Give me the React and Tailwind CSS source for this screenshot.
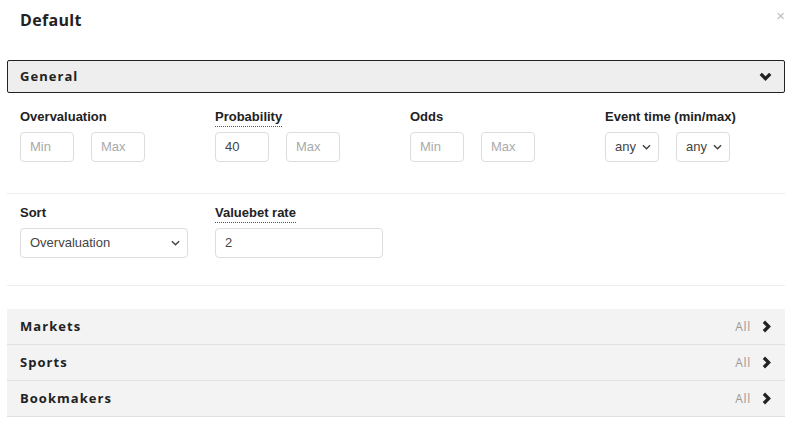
import React from "react";

const headFont = { fontFamily: '"Open Sans", "DejaVu Sans", sans-serif' };

const ChevronDown = ({ className }) => (
    <svg viewBox="0 0 12 8" className={className} fill="none">
        <path d="M1.6 1.6 L6 6 L10.4 1.6" stroke="currentColor" strokeWidth="3" strokeLinejoin="miter" />
    </svg>
);

const ChevronRight = ({ className }) => (
    <svg viewBox="0 0 8 12" className={className} fill="none">
        <path d="M1.6 1.6 L6 6 L1.6 10.4" stroke="currentColor" strokeWidth="3" strokeLinejoin="miter" />
    </svg>
);

const SmallCaret = () => (
    <svg viewBox="0 0 10 6" className="w-[9px] h-[6px] text-[#444]" fill="none">
        <path d="M1 1 L5 5 L9 1" stroke="currentColor" strokeWidth="1.6" />
    </svg>
);

const Label = ({ children, dotted }) => (
    <div className="h-[18px] mb-[5px] flex items-start leading-[16px]">
        <span
            className={
                "text-[13px] font-bold text-[#222] leading-[16px] block " +
                (dotted ? "border-b border-dotted border-[#555] pb-[1px]" : "")
            }
        >
            {children}
        </span>
    </div>
);

const Box = ({ value, placeholder, width = "w-[54px]" }) => (
    <div
        className={
            width +
            " h-[30px] border border-[#ddd] rounded-[4px] flex items-center px-[9px] text-[13px] " +
            (value ? "text-[#444]" : "text-[#aaa]")
        }
    >
        {value || placeholder}
    </div>
);

const SelectBox = ({ value, width }) => (
    <div
        className={
            width +
            " h-[30px] border border-[#ddd] rounded-[4px] flex items-center justify-between pl-[9px] pr-[7px] text-[13px] text-[#444]"
        }
    >
        <span>{value}</span>
        <SmallCaret />
    </div>
);

const Field = ({ label, dotted, children }) => (
    <div className="w-[195px] shrink-0">
        <Label dotted={dotted}>{label}</Label>
        <div className="flex gap-[17px]">{children}</div>
    </div>
);

const rows = ["Markets", "Sports", "Bookmakers"];

export default function App() {
    return (
        <div className="w-[800px] h-[430px] bg-white overflow-hidden" style={{ fontFamily: '"Liberation Sans", Arial, sans-serif' }}>
            <div className="h-[40px] flex items-center justify-between pl-5 pr-[15px]">
                <h1 className="text-[16px] font-bold text-[#222] tracking-[0.02em]" style={headFont}>
                    Default
                </h1>
                <span className="text-[15px] text-[#bbb] -mt-[8px]">×</span>
            </div>

            <div className="mt-[20px] mx-[7px] w-[778px] h-[33px] border-[1.5px] border-[#222] bg-[#eee] rounded-[2px] flex items-center justify-between pl-[12px] pr-[12px]">
                <span className="text-[13px] font-bold text-[#222] tracking-[0.08em]" style={headFont}>
                    General
                </span>
                <ChevronDown className="w-[13px] h-[9px] text-[#222]" />
            </div>

            <div className="mx-[7px] w-[778px] border-b border-[#eee] pt-[16px] pb-[31px] pl-[13px] flex overflow-visible">
                <Field label="Overvaluation">
                    <Box placeholder="Min" />
                    <Box placeholder="Max" />
                </Field>
                <Field label="Probability" dotted>
                    <Box value="40" />
                    <Box placeholder="Max" />
                </Field>
                <Field label="Odds">
                    <Box placeholder="Min" />
                    <Box placeholder="Max" />
                </Field>
                <Field label="Event time (min/max)">
                    <SelectBox value="any" width="w-[54px]" />
                    <SelectBox value="any" width="w-[54px]" />
                </Field>
            </div>

            <div className="mx-[7px] w-[778px] border-b border-[#eee] pt-[11px] pb-[27px] pl-[13px] flex">
                <Field label="Sort">
                    <SelectBox value="Overvaluation" width="w-[168px]" />
                </Field>
                <Field label="Valuebet rate" dotted>
                    <Box value="2" width="w-[168px]" />
                </Field>
            </div>

            <div className="mt-[23px] mx-[7px] w-[778px]">
                {rows.map((name) => (
                    <div
                        key={name}
                        className="h-[36px] bg-[#f3f3f3] border-b border-[#e0e0e0] flex items-center justify-between pl-[13px] pr-[14px]"
                    >
                        <span className="text-[13px] font-bold text-[#222] tracking-[0.08em]" style={headFont}>
                            {name}
                        </span>
                        <div className="flex items-center gap-[11px]">
                            <span className="text-[12px] text-[#999] tracking-[0.06em]" style={headFont}>
                                All
                            </span>
                            <ChevronRight className="w-[9px] h-[13px] text-[#222]" />
                        </div>
                    </div>
                ))}
            </div>
        </div>
    );
}
